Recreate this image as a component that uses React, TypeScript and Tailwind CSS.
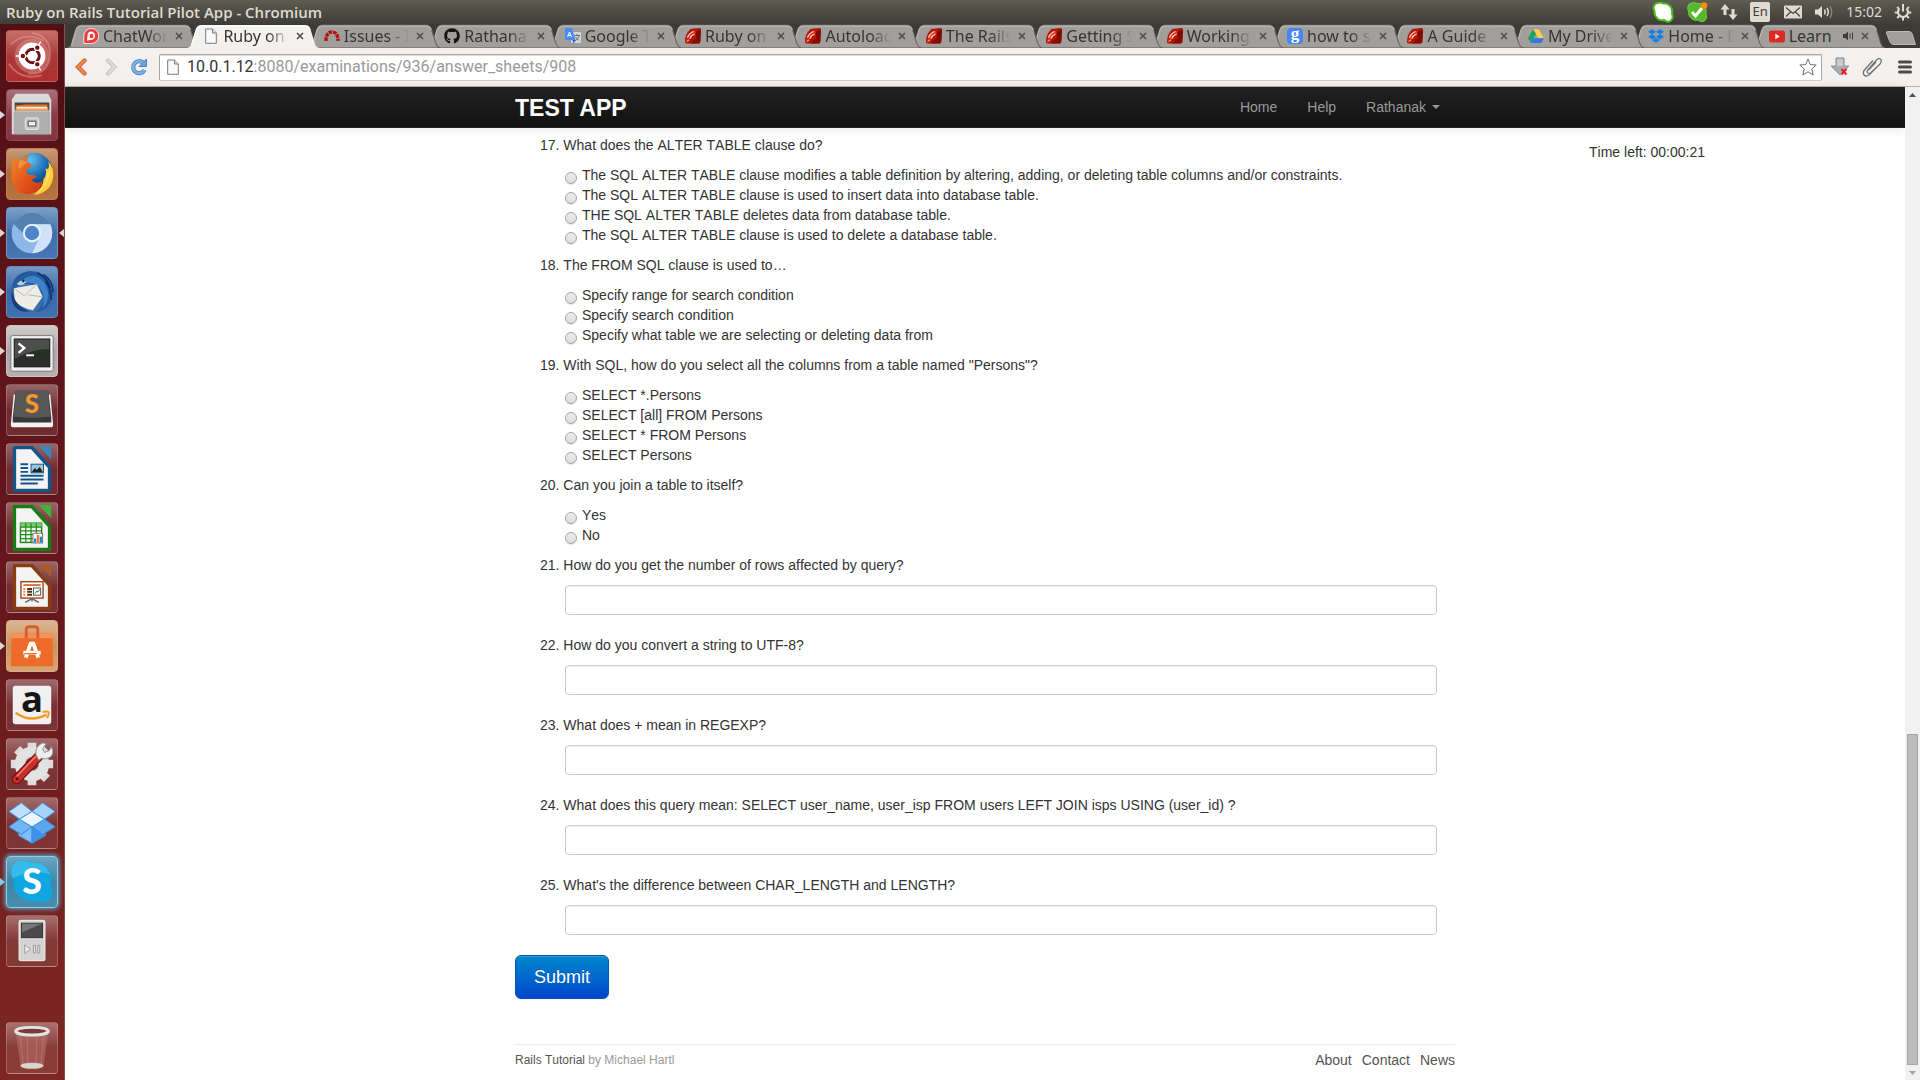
import React, { useState } from "react";
import { FaGithub, FaDropbox } from "react-icons/fa";

/* ---------- tab favicons (16 x 16) ---------- */

const RubyIcon = () => (
  <svg viewBox="0 0 16 16" className="size-4">
    <path d="M5.500 1 L14.500 0 Q16 0 16 1.500 L15.200 14 Q15 15.800 13.500 15.800 L1.500 15.600 Q0 15.500 0 13.500 Q0 6 5.500 1Z" fill="#b01505" />
    <path d="M10.500 4 L16 1.500 L15.200 14.500 L11.500 13Z" fill="#7d0a02" />
    <path d="M5 15.600 L11.500 9 L15 15Z" fill="#8c0d03" />
    <path d="M1.500 10 Q3 5 8 2.500 L11 3.500 L10 6.500 Q6 7.500 5 11.500 L2 12.500Z" fill="#d8301b" />
    <path d="M2.500 9.500 Q4 5.500 8.500 3.500 M5 10.500 Q6 7.500 9.500 6" stroke="#ffd9cc" strokeWidth="1.200" fill="none" />
    <path d="M1.500 13.500 L4 12" stroke="#f7a08f" strokeWidth="1.200" />
  </svg>
);
const ChatIcon = () => (
  <svg viewBox="0 0 16 16" className="size-4">
    <path d="M8.500 .5 A7 7.200 0 1 1 8.500 15.500 H.8 V8 A7.500 7.500 0 0 1 8.500 .5Z" fill="#f03b3b" stroke="#fff" strokeWidth=".8" />
    <path d="M8.500 3.500 A4.300 4.300 0 1 1 7 12 L4 12.800 L4.500 7.500 A4.200 4.200 0 0 1 8.500 3.500Z" fill="#fff" />
    <path d="M8.500 5.500 Q10.500 5.500 10.500 8 L10 10 L7 10.300 Q6.500 6 8.500 5.500Z" fill="#f03b3b" />
  </svg>
);
const PageIcon = () => (
  <svg viewBox="0 0 12 16" className="h-4 w-3">
    <path d="M.7 1 H7.500 L11.300 5 V15.300 H.7Z" fill="#fafafa" stroke="#7b7b7b" />
    <path d="M7.500 1 V5 H11.300" fill="#ddd" stroke="#7b7b7b" />
  </svg>
);
const RedmineIcon = () => (
  <svg viewBox="0 0 16 16" className="size-4">
    <path d="M2 13 Q2 4 8 4 Q14 4 14 13" fill="none" stroke="#b31217" strokeWidth="3.400" strokeDasharray="3.600 .8" />
  </svg>
);
const TranslateIcon = () => (
  <svg viewBox="0 0 16 16" className="size-4">
    <rect x="6" y="4" width="10" height="11" rx="1" fill="#d5d5d5" />
    <path d="M9 7.500 H15 M12 6 V7.500 M14 8 Q13 11 10 13 M10.500 9 L14 12.500" stroke="#5d7380" fill="none" />
    <path d="M0 1 Q0 0 1 0 H7 L10.500 12 H1 Q0 12 0 11Z" fill="#4a8af4" />
    <path d="M7.500 12 H10.500 L8.500 15.500Z" fill="#2a56c6" />
    <path d="M2.500 9 L4.500 4 L6.500 9 M3.200 7.500 H5.800" stroke="#fff" fill="none" />
  </svg>
);
const GoogleIcon = () => (
  <span className="flex size-4 items-center justify-center rounded-sm bg-[#4587f0] pb-1 font-['Liberation_Serif',serif] text-[17px] leading-4 font-bold text-white">g</span>
);
const DriveIcon = () => (
  <svg viewBox="0 0 16 16" className="size-4">
    <path d="M5.300 1.300 L8 6 L2.700 15 L0 10.300Z" fill="#11a861" />
    <path d="M5.300 1.300 H10.700 L16 10.300 H10.600Z" fill="#ffcf48" />
    <path d="M5.400 10.300 H16 L13.300 15 H2.700Z" fill="#3777e3" />
  </svg>
);
const YoutubeIcon = () => (
  <svg viewBox="0 0 16 16" className="size-4">
    <rect y="2.500" width="16" height="12" rx="2.500" fill="#dd2a22" />
    <path d="M6.300 5.700 L10.800 8.500 L6.300 11.200Z" fill="#fff" />
  </svg>
);

type Tab = { title: string; icon: React.ReactNode; sound?: boolean };
const tabs: Tab[] = [
  { title: "ChatWor", icon: <ChatIcon /> },
  { title: "Ruby on", icon: <PageIcon /> },
  { title: "Issues - I", icon: <RedmineIcon /> },
  { title: "Rathana", icon: <FaGithub className="size-4 text-[#141414]" /> },
  { title: "Google T", icon: <TranslateIcon /> },
  { title: "Ruby on", icon: <RubyIcon /> },
  { title: "Autoload", icon: <RubyIcon /> },
  { title: "The Rails", icon: <RubyIcon /> },
  { title: "Getting S", icon: <RubyIcon /> },
  { title: "Working", icon: <RubyIcon /> },
  { title: "how to s", icon: <GoogleIcon /> },
  { title: "A Guide I", icon: <RubyIcon /> },
  { title: "My Drive", icon: <DriveIcon /> },
  { title: "Home - D", icon: <FaDropbox className="size-4 text-[#1081e8]" /> },
  { title: "Learn", icon: <YoutubeIcon />, sound: true },
];

function BrowserTab({ tab, active, z }: { tab: Tab; active: boolean; z: number }) {
  return (
    <div className="relative flex h-6 min-w-0 flex-1 items-center pl-4" style={{ zIndex: z }}>
      <svg viewBox="0 0 132 24" preserveAspectRatio="none" className="absolute top-0 left-0 h-6 w-[calc(100%+12px)]">
        <path
          d="M0 24 C4 23 4 21 5 18 L9 5 Q10.500 1 14 1 H118 Q121.500 1 123 5 L127 18 C128 21 128 23 132 24Z"
          fill={active ? "#f2f1f0" : "#a09f9c"}
          stroke={active ? "none" : "#62615c"}
          strokeWidth="1"
        />
        <path d="M4.500 21 L9 6 Q10.500 2 14 2 H118 Q121.500 2 123 6" fill="none" stroke={active ? "#fff" : "#c0bfbc"} />
      </svg>
      <span className="relative flex w-4 shrink-0 justify-center">{tab.icon}</span>
      <button
        className={
          tab.sound
            ? "relative ml-1 w-[48px] text-left text-[16px] leading-6 whitespace-nowrap text-[#37352f]"
            : "relative ml-1 min-w-0 flex-1 overflow-hidden text-left text-[16px] leading-6 whitespace-nowrap text-[#37352f] [mask-image:linear-gradient(to_right,#000_68%,transparent)]"
        }
      >
        {tab.title}
      </button>
      {tab.sound && (
        <svg viewBox="0 0 12 12" className="relative ml-auto size-3 text-[#3c3b37]">
          <path d="M1 4 H3.500 L6 1.500 V10.500 L3.500 8 H1Z" fill="currentColor" />
          <path d="M8 3.500 V8.500 M10.500 2.500 V9.500" stroke="currentColor" />
        </svg>
      )}
      <button aria-label={"Close " + tab.title} className="relative mr-[3px] ml-[6px] shrink-0">
        <svg viewBox="0 0 10 10" className="size-[10px]">
          <path d="M2 2 L8 8 M8 2 L2 8" stroke="#504f4b" strokeWidth="1.600" />
        </svg>
      </button>
    </div>
  );
}

/* ---------- system indicators ---------- */

const skypeBlob = "M6 2 Q3 2 2 5 Q1 8 2.500 10 Q2 15 6 18 Q9 20 12 19 Q15 22 18.500 20 Q22 17 20 13 Q21 7 17 4 Q14 2 11 2.500 Q9 1 6 2Z";

function TitleBar() {
  return (
    <header className="flex h-6 items-center bg-linear-to-b from-[#5f5c50] to-[#3e3d38] pr-2 pl-[6px] font-['Noto_Sans',sans-serif] text-[#dfdbd2]">
      <h1 className="flex-1 font-['Open_Sans',sans-serif] text-[15px] leading-6 font-semibold">Ruby on Rails Tutorial Pilot App - Chromium</h1>
      <div className="flex items-center gap-3">
        <svg viewBox="0 0 22 22" className="size-[22px]">
          <path d={skypeBlob} fill="#fff" stroke="#4cba1c" strokeWidth="2" />
        </svg>
        <svg viewBox="0 0 22 22" className="size-[22px]">
          <path d={skypeBlob} fill="#55b82c" stroke="#6fd23c" />
          <path d="M6 11 L9.500 15 L16 7" stroke="#fff" strokeWidth="3" fill="none" />
          <circle cx="18" cy="4.500" r="3.300" fill="#f98c0e" />
        </svg>
        <svg viewBox="0 0 18 18" className="size-[18px]">
          <path d="M5 1 L9.500 6.500 H6.500 V12 H3.500 V6.500 H.5Z M13 17 L8.500 11.500 H11.500 V6 H14.500 V11.500 H17.500Z" fill="#dfdbd2" />
        </svg>
        <span className="mr-[2px] flex h-5 w-5 items-center justify-center rounded-xs bg-[#dfdbd2] text-[13px] text-[#3e3d38]">En</span>
        <svg viewBox="0 0 18 14" className="h-[14px] w-[18px]">
          <rect width="18" height="13" y=".5" rx="1" fill="#dfdbd2" />
          <path d="M2 2.500 L9 8.500 L16 2.500 M2 11.500 L6.500 7 M16 11.500 L11.500 7" stroke="#4b4942" fill="none" strokeWidth="1.300" />
        </svg>
        <svg viewBox="0 0 20 16" className="h-4 w-5">
          <path d="M1 5.500 H4 L8 2 V14 L4 10.500 H1Z" fill="#dfdbd2" />
          <path d="M10.500 5.500 Q12 8 10.500 10.500 M13 4 Q15.500 8 13 12" stroke="#dfdbd2" strokeWidth="1.500" fill="none" />
          <path d="M16 2 Q19.500 8 16 14" stroke="#8b887f" strokeWidth="1.300" fill="none" />
        </svg>
        <time className="text-[14px] leading-6">15:02</time>
        <svg viewBox="0 0 18 18" className="size-[18px]">
          <path d="M5.500 5.500 A5 5 0 1 0 12.500 5.500" fill="none" stroke="#dfdbd2" strokeWidth="2.200" />
          <path
            d="M9 1 V8.500 M3.500 9.500 H.8 M14.500 9.500 H17.200 M9 14.500 V17.500 M5 13 L3.200 15.200 M13 13 L14.800 15.200 M4.500 5.500 L3.200 3.800 M13.500 5.500 L14.800 3.800"
            stroke="#dfdbd2"
            strokeWidth="2"
          />
        </svg>
      </div>
    </header>
  );
}

/* ---------- launcher ---------- */

const Art = ({ children }: { children: React.ReactNode }) => (
  <svg viewBox="0 0 52 52" className="size-full">
    {children}
  </svg>
);

const UbuntuArt = () => (
  <Art>
    <path d="M26 2 Q48 6 44 30 Q40 46 22 44 M4 14 Q18 0 38 10 M2 34 Q14 52 36 46" stroke="#e9a9a4" strokeOpacity=".45" strokeWidth="2" fill="none" />
    <circle cx="26" cy="26" r="18" fill="#d98d88" fillOpacity=".5" />
    <circle cx="26" cy="26" r="14" fill="#fff" />
    <circle cx="26.500" cy="26" r="7" fill="none" stroke="#6d1216" strokeWidth="3.200" />
    <path d="M26.500 26 L35 41 M26.500 26 L35 11 M26.500 26 H9" stroke="#fff" strokeWidth="1.400" />
    <circle cx="26.500" cy="26" r="5.200" fill="#fff" />
    <g fill="#6d1216" stroke="#fff" strokeWidth="1.200">
      <circle cx="16.500" cy="26" r="2.900" />
      <circle cx="31.500" cy="17.300" r="2.900" />
      <circle cx="31.500" cy="34.700" r="2.900" />
    </g>
  </Art>
);
const FilesArt = () => (
  <Art>
    <path d="M9 4 H43 L46 10 V46 H5 V10Z" fill="#d9d9d9" />
    <rect x="8" y="13" width="36" height="12" fill="#4c4644" />
    <path d="M9 16 L20 15 H42 V21 H9Z" fill="#e8742c" />
    <rect x="10" y="17.500" width="32" height="2" fill="#f7efdf" />
    <rect x="9" y="19.500" width="34" height="2" fill="#f1a45a" />
    <path d="M7 22 H45 V46 H7Z" fill="#aeaeae" />
    <path d="M7 22 H45" stroke="#dcdcdc" />
    <rect x="19" y="29" width="14" height="12" rx="2" fill="#c6c6c6" stroke="#e9e9e9" />
    <rect x="22" y="32.500" width="8" height="5" fill="#eee" stroke="#666" strokeWidth="1.300" />
  </Art>
);
const FirefoxArt = () => (
  <Art>
    <defs>
      <radialGradient id="ffb" cx=".4" cy=".2" r=".8">
        <stop offset="0" stopColor="#66c0ec" />
        <stop offset=".6" stopColor="#1466ae" />
        <stop offset="1" stopColor="#0b2c66" />
      </radialGradient>
      <linearGradient id="ffo" x1="0" y1="0" x2="1" y2="1">
        <stop offset="0" stopColor="#f08a2c" />
        <stop offset=".6" stopColor="#e2501a" />
        <stop offset="1" stopColor="#c93812" />
      </linearGradient>
    </defs>
    <circle cx="28" cy="23" r="19" fill="url(#ffb)" />
    <path d="M43 13 Q49 20 48 29 Q46 45 28 48 Q38 40 38 31 Q42 27 40 20 Q45 23 43 13Z" fill="#ffcf33" />
    <path d="M45 18 Q46 32 36 42 Q30 47 24 47 Q42 42 41 26 Q45 24 45 18Z" fill="#fff0a0" opacity=".6" />
    <path d="M7 9 Q11 12 14 11 Q18 7 23 7 Q20 10 21 14 Q26 15 25 18 Q24 20 20 22 Q20 26 24 27 Q29 26 31 30 Q27 29 26 33 Q31 37 37 33 Q36 42 28 46 Q16 49 9 41 Q3 34 5 24 Q4 16 7 9Z" fill="url(#ffo)" />
    <path d="M14 11 Q10 17 13 21 Q17 16 21 14" fill="#f4a14c" opacity=".7" />
  </Art>
);
const ChromiumArt = () => (
  <Art>
    <circle cx="26" cy="26" r="21" fill="#7fb0e2" />
    <path d="M7 17 A21 21 0 0 1 45 17 H26 Q16 19 17 26Z" fill="#5180ae" />
    <path d="M45 17 A21 21 0 0 1 26 47 L34 30 Q36 20 27 17Z" fill="#cfe2f7" />
    <path d="M7 17 A21 21 0 0 0 26 47 L32 33 Q20 38 16 27Z" fill="#8db9ea" />
    <circle cx="26" cy="26" r="9.500" fill="#eaf3fd" />
    <circle cx="26" cy="26" r="7.500" fill="#4d86c9" />
  </Art>
);
const ThunderbirdArt = () => (
  <Art>
    <path d="M11 9 Q25 0 38 8 Q50 18 47 32 Q43 46 28 47 Q40 41 38 29 Q34 16 14 18 Q6 22 5 27 Q4 15 11 9Z" fill="#245b9d" />
    <path d="M14 18 Q17 9 28 9 Q42 13 43 30 Q42 38 37 43 Q41 28 33 20 Q24 14 14 18Z" fill="#3e83c9" />
    <path d="M38 8 Q48 14 48 26 M40 15 Q46 22 46 34 M32 6 Q43 12 45 22" stroke="#0e2f66" strokeWidth="1.500" fill="none" />
    <path d="M7 22 L31 18 L37 31 L27 45 Q12 42 8 34Z" fill="#eeece6" />
    <path d="M7 22 L18 30 L31 18 M22 29 L37 31" stroke="#b9b5a8" fill="none" />
    <path d="M5 24 Q8 42 24 46 Q14 48 8 41 Q3 34 5 24Z" fill="#173f7d" />
    <path d="M10 18 Q14 12 20 15 Q16 21 10 18Z" fill="#a9d0ee" />
    <circle cx="17" cy="14.500" r="1.300" fill="#112222" />
  </Art>
);
const TerminalArt = () => (
  <Art>
    <rect x="4" y="10" width="44" height="37" rx="2" fill="#f0f0f0" stroke="#777" />
    <rect x="7.500" y="13.500" width="37" height="29" fill="#2b2d2b" stroke="#111" />
    <path d="M8 14 H44 V24 Q26 24 8 34Z" fill="#4b4e4b" />
    <path d="M12 18 L18 23 L12 28" stroke="#fff" strokeWidth="2.400" fill="none" />
    <path d="M20 30.500 H28" stroke="#fff" strokeWidth="2" />
  </Art>
);
const SublimeArt = () => (
  <Art>
    <path d="M7 10 L4 41 Q4 44 7 44 H45 Q48 44 48 41 L45 10Z" fill="#f3f3f3" />
    <path d="M9 6 H43 L46 34 V39 H6 V34Z" fill="#383838" />
    <path d="M9 6 H43 L45 33 Q26 35 7 33Z" fill="#575757" />
    <text x="26" y="29" textAnchor="middle" fontFamily="Lato, sans-serif" fontWeight="900" fontSize="27" fill="#f8982c">S</text>
  </Art>
);
const DocBase = ({ dark, light, children }: { dark: string; light: string; children: React.ReactNode }) => (
  <Art>
    <path d="M8 2 H27 L46 24 V47 Q46 50 43 50 H9 Q6 50 6 47 V4 Q6 2 8 2Z" fill={dark} />
    <path d="M33 2 H44 Q46 2 46 4 V16Z" fill={light} />
    <path d="M9.500 5.500 H25 L42.500 25 V46.500 H9.500Z" fill="#f4f4f4" />
    {children}
  </Art>
);
const WriterArt = () => (
  <DocBase dark="#14558a" light="#3a86b8">
    <path d="M14 21 H22 M14 25 H22 M14 29 H22 M14 33 H38 M14 37 H38 M14 41 H32" stroke="#14558a" strokeWidth="2" />
    <rect x="25" y="21" width="13" height="9" fill="#8fc4e8" stroke="#14558a" />
    <path d="M25.500 29.500 L29 25 L31 27 L34 24 L37.500 29.500Z" fill="#222" />
    <circle cx="35.500" cy="23.500" r="1.200" fill="#f4c430" />
  </DocBase>
);
const CalcArt = () => (
  <DocBase dark="#187d12" light="#45b038">
    <rect x="14" y="21" width="22" height="20" fill="#fff" stroke="#1f8a18" strokeWidth="1.500" />
    <rect x="14" y="21" width="22" height="4" fill="#7ccf70" />
    <path d="M14 25 H36 M14 29 H36 M14 33 H36 M14 37 H36 M19.500 21 V41 M25 21 V41 M30.500 21 V41" stroke="#1f8a18" strokeWidth="1.300" />
    <rect x="27" y="31.500" width="10" height="10" fill="#fff" stroke="#777" />
    <rect x="28" y="37" width="2.500" height="4" fill="#2287c8" />
    <rect x="31" y="33" width="2.500" height="8" fill="#f07b22" />
    <rect x="34" y="35" width="2.500" height="6" fill="#2287c8" />
  </DocBase>
);
const ImpressArt = () => (
  <DocBase dark="#8a3d10" light="#a85a2a">
    <rect x="14.500" y="20.500" width="23" height="17" fill="#fff" stroke="#a34a1c" strokeWidth="1.500" />
    <path d="M17 24 H35" stroke="#d9713c" strokeWidth="2" />
    <path d="M17 28 H19 M17 31 H19 M17 34 H19" stroke="#e08a5a" strokeWidth="2" />
    <path d="M21 28 H26 M21 31 H26 M21 34 H26" stroke="#5a2a10" strokeWidth="2" />
    <rect x="27.500" y="27" width="7.500" height="7.500" fill="#fff" stroke="#555" />
    <path d="M29 33 L31 30 L32 31.500 L34 28.500" stroke="#2a8a22" fill="none" />
    <path d="M26 38 L19 42 M26 38 L33 42 M26 38 V41" stroke="#666" strokeWidth="1.500" />
  </DocBase>
);
const SoftwareArt = () => (
  <Art>
    <path d="M5 13 H47 L48 47 H4Z" fill="#ee6a28" />
    <path d="M5 13 H47 V18 H5Z" fill="#f4915c" />
    <path d="M20 18 V9 Q20 6 23 6 H29 Q32 6 32 9 V18" stroke="#dd5d28" strokeWidth="3" fill="none" />
    <path d="M19.500 38 L24.500 23.500 H27.500 L32.500 38" stroke="#fff" strokeWidth="4" fill="none" />
    <path d="M17 33 H35" stroke="#fff" strokeWidth="4" />
    <path d="M18 34 H31" stroke="#ee6a28" strokeWidth="1.300" />
  </Art>
);
const AmazonArt = () => (
  <Art>
    <rect x="6" y="6" width="40" height="40" rx="3" fill="#f0f0f0" />
    <text x="26" y="33" textAnchor="middle" fontFamily="Open Sans, sans-serif" fontWeight="700" fontSize="38" fill="#161616">a</text>
    <path d="M9 34 Q24 45 41 36" stroke="#f79a1c" strokeWidth="2.600" fill="none" />
    <path d="M37 33.500 Q41 32 43.500 33.500 Q43.500 37 41.500 39.500" stroke="#f79a1c" strokeWidth="2" fill="none" />
  </Art>
);
const SettingsArt = () => (
  <Art>
    <g stroke="#dcdcdc" strokeWidth="9">
      <path d="M26 4 V48 M4 26 H48 M10.500 10.500 L41.500 41.500 M41.500 10.500 L10.500 41.500" />
    </g>
    <circle cx="26" cy="26" r="12.500" fill="none" stroke="#e2e2e2" strokeWidth="11" />
    <circle cx="26" cy="26" r="7" fill="#7a2a2a" stroke="#a9a9a9" />
    <path d="M10 42 L33 18" stroke="#7d0f0f" strokeWidth="10" strokeLinecap="round" />
    <path d="M10 42 L33 18" stroke="#c9302b" strokeWidth="7.500" strokeLinecap="round" />
    <path d="M10 39 L30 18" stroke="#ea8377" strokeWidth="1.500" />
    <path d="M30 16 Q29 8 37 4 L41 5 L37 10 L39 14 L44 12 L46 8 Q50 14 45 19 Q40 22 36 20 L33 22Z" fill="#efefef" stroke="#8c8c8c" />
    <circle cx="10.500" cy="41.500" r="1.500" fill="#5c0c0c" />
  </Art>
);
const DropboxArt = () => (
  <Art>
    <g stroke="#3b8fe0" strokeWidth="1">
      <path d="M15 5 L26 14 L13 22 L2 14Z" fill="#bfe0fb" />
      <path d="M37 5 L26 14 L39 22 L50 14Z" fill="#a4d2f9" />
      <path d="M13 22 L26 30 L15 38 L2 30Z" fill="#6fb6f3" />
      <path d="M39 22 L26 30 L37 38 L50 30Z" fill="#58a8ef" />
      <path d="M26 14 L39 22 L26 30 L13 22Z" fill="#e9f5ff" />
      <path d="M12 36 L15 38 L26 30 V47 L12 39Z" fill="#7fbff6" />
      <path d="M40 36 L37 38 L26 30 V47 L40 39Z" fill="#3e93e6" />
    </g>
  </Art>
);
const SkypeArt = () => (
  <Art>
    <path d="M16 4 Q22 4 25 6 Q40 5 45 18 Q47 24 45 30 Q49 36 46 42 Q41 49 33 46 Q20 48 11 39 Q5 31 7 23 Q2 14 7 8 Q11 4 16 4Z" fill="#0fa6e2" />
    <path d="M16 4 Q22 4 25 6 Q40 5 45 18 Q26 12 6 22 Q2 14 7 8 Q11 4 16 4Z" fill="#35bbec" />
    <text x="26" y="38" textAnchor="middle" fontFamily="Lato, sans-serif" fontWeight="900" fontSize="37" fill="#fff">S</text>
  </Art>
);
const PlayerArt = () => (
  <Art>
    <rect x="12.500" y="4.500" width="27" height="42" rx="1.500" fill="#d6d4d3" stroke="#f4f4f4" />
    <rect x="15" y="7.500" width="22" height="15" fill="#4a4a4a" stroke="#333" />
    <path d="M15.500 8 H36.500 L15.500 17Z" fill="#777" />
    <path d="M18.500 30 L24.500 34.500 L18.500 39Z M27.500 30.500 H29.500 V38.500 H27.500Z M32 30.500 H34 V38.500 H32Z" fill="#eee" stroke="#999" />
  </Art>
);
const TrashArt = () => (
  <Art>
    <path d="M9 9 L14 45 Q26 50 38 45 L43 9Z" fill="#b46c6a" fillOpacity=".6" />
    <path d="M14 14 L17 46 M21 15 L22 47 M31 15 L30 47 M38 14 L35 46" stroke="#e0aaa7" strokeOpacity=".3" />
    <ellipse cx="26" cy="44.500" rx="12" ry="3.200" fill="#d5d5d0" />
    <ellipse cx="26" cy="8.500" rx="17" ry="4" fill="#7b3a3a" stroke="#e4e4df" strokeWidth="3" />
  </Art>
);

type LauncherApp = { name: string; tile: string; art: React.ReactNode; running?: boolean; focused?: boolean; arrow?: string };
const glass = "border-white/20 from-white/35 via-white/10 to-white/10";
const apps: LauncherApp[] = [
  { name: "Dash home", tile: "border-[#c9605c]/60 from-[#c9706c] via-[#a83a3c] to-[#b02f2d]", art: <UbuntuArt /> },
  { name: "Files", tile: "border-[#8f4a55] from-[#a8737b] via-[#8a3a47] to-[#853542]", art: <FilesArt />, running: true },
  { name: "Firefox", tile: "border-[#b8835a] from-[#c89c77] via-[#ad6b38] to-[#b9743f]", art: <FirefoxArt />, running: true },
  { name: "Chromium", tile: "border-[#6f97c6] from-[#7d9fc8] via-[#3f6ea9] to-[#4876b4]", art: <ChromiumArt />, running: true, focused: true },
  { name: "Thunderbird", tile: "border-[#5f8cc2] from-[#7599c5] via-[#3a69a8] to-[#3f70b0]", art: <ThunderbirdArt />, running: true },
  { name: "Terminal", tile: "border-[#c9c4c4] from-[#d3cece] via-[#aba5a5] to-[#b5b0b0]", art: <TerminalArt />, running: true },
  { name: "Sublime Text", tile: glass, art: <SublimeArt /> },
  { name: "LibreOffice Writer", tile: glass, art: <WriterArt /> },
  { name: "LibreOffice Calc", tile: glass, art: <CalcArt /> },
  { name: "LibreOffice Impress", tile: glass, art: <ImpressArt /> },
  { name: "Software Center", tile: "border-[#d9ad84] from-[#dcb795] via-[#cc9159] to-[#d6a578]", art: <SoftwareArt />, running: true },
  { name: "Amazon", tile: glass, art: <AmazonArt /> },
  { name: "System Settings", tile: glass, art: <SettingsArt /> },
  { name: "Dropbox", tile: glass, art: <DropboxArt /> },
  {
    name: "Skype",
    tile: "border-[#8ad0ea] from-[#6aa7c2] via-[#3f86a6] to-[#4a8cab] shadow-[0_0_5px_1px_#58b4dc]",
    art: <SkypeArt />,
    running: true,
    arrow: "text-[#7fcdec]",
  },
  { name: "Media player", tile: glass, art: <PlayerArt /> },
];

function LauncherItem({ app }: { app: LauncherApp }) {
  return (
    <li className="relative">
      {app.running && (
        <svg viewBox="0 0 5 8" className={"absolute top-[22px] -left-[6px] h-2 w-[5px] " + (app.arrow ?? "text-[#dcd5d5]")}>
          <path d="M0 0 L5 4 L0 8Z" fill="currentColor" />
        </svg>
      )}
      <button aria-label={app.name} className={"block size-[52px] rounded-sm border bg-linear-to-b " + app.tile}>
        {app.art}
      </button>
      {app.focused && (
        <svg viewBox="0 0 5 8" className="absolute top-[22px] -right-[6px] h-2 w-[5px] text-[#dcd5d5]">
          <path d="M5 0 L0 4 L5 8Z" fill="currentColor" />
        </svg>
      )}
    </li>
  );
}

function Launcher() {
  return (
    <nav aria-label="Launcher" className="flex w-[65px] shrink-0 flex-col border-r border-[#8f4a4a] bg-linear-to-b from-[#531015] via-[#64161b] to-[#7e2722] px-[6px] py-[6px]">
      <ul className="flex flex-1 flex-col gap-[7px]">
        {apps.map((a) => (
          <LauncherItem key={a.name} app={a} />
        ))}
        <li className="mt-auto">
          <button aria-label="Trash" className="block size-[52px] rounded-sm border border-white/20 bg-linear-to-b from-white/35 via-white/10 to-white/10">
            <TrashArt />
          </button>
        </li>
      </ul>
    </nav>
  );
}

/* ---------- browser chrome ---------- */

function TabStrip() {
  return (
    <div className="isolate flex h-6 bg-[#3c3b37] pl-[2px]">
      {tabs.map((t, i) => (
        <BrowserTab key={i} tab={t} active={i === 1} z={i === 1 ? 30 : 20 - i} />
      ))}
      <button aria-label="New tab" className="mr-[3px] ml-3 pt-1">
        <svg viewBox="0 0 32 16" className="h-4 w-8">
          <path d="M2.500 1.500 H24 Q26 1.500 27 3.500 L30.500 14.500 H9 Q6 14.500 5 12 L1.500 3 Q1 1.500 2.500 1.500Z" fill="#a09f9c" stroke="#b9b8b5" />
        </svg>
      </button>
    </div>
  );
}

function Toolbar() {
  return (
    <div className="flex h-[39px] items-center border-b border-[#b5b3b0] bg-[#f2f1f0] pr-2 pl-[9px]">
      <button aria-label="Back">
        <svg viewBox="0 0 14 18" className="h-[18px] w-[14px]">
          <path d="M10.500 2.500 L4 9 L10.500 15.500" stroke="#c5562a" strokeWidth="4.200" strokeLinecap="round" fill="none" />
          <path d="M10.500 2.500 L4 9 L10.500 15.500" stroke="#f58549" strokeWidth="2.600" strokeLinecap="round" fill="none" />
        </svg>
      </button>
      <button aria-label="Forward" disabled className="ml-4">
        <svg viewBox="0 0 14 18" className="h-[18px] w-[14px]">
          <path d="M4 2.500 L10.500 9 L4 15.500" stroke="#c6c4c2" strokeWidth="4" strokeLinecap="round" fill="none" />
          <path d="M4 2.500 L10.500 9 L4 15.500" stroke="#dddbd9" strokeWidth="2.400" strokeLinecap="round" fill="none" />
        </svg>
      </button>
      <button aria-label="Reload" className="ml-3">
        <svg viewBox="0 0 18 18" className="size-[18px]">
          <path d="M13 4.500 A6 6 0 1 0 14.500 12" stroke="#4a82bd" strokeWidth="4.200" fill="none" />
          <path d="M16.500 1 V8.500 H9Z" fill="#6ba3da" stroke="#4a82bd" />
          <path d="M13 4.500 A6 6 0 1 0 14.500 12" stroke="#7db1e2" strokeWidth="2.600" fill="none" />
        </svg>
      </button>
      <div className="ml-[11px] flex h-[27px] min-w-0 flex-1 items-center rounded-xs border border-[#a9a7a4] border-b-[#cfcdca] bg-white pr-1 pl-[7px] shadow-[inset_0_1px_0_#dedede]">
        <PageIcon />
        <p className="ml-2 flex-1 font-[Roboto,sans-serif] text-[16px] leading-6 text-[#9a9a9a]">
          <span className="text-[#333]">10.0.1.12</span>:8080/examinations/936/answer_sheets/908
        </p>
        <button aria-label="Bookmark this page">
          <svg viewBox="0 0 18 18" className="size-[18px]">
            <path d="M9 1 L11.300 6.600 L17.200 7 L12.700 11 L14.200 17 L9 13.800 L3.800 17 L5.300 11 L.8 7 L6.700 6.600Z" fill="#fff" stroke="#6d6d6d" strokeLinejoin="round" />
          </svg>
        </button>
      </div>
      <button aria-label="Downloads" className="ml-2">
        <svg viewBox="0 0 20 20" className="size-5">
          <path d="M6 1 H14 V9 H19 L10 18 L1 9 H6Z" fill="#a6adb2" stroke="#8b9297" />
          <path d="M7 2 H13 V9 H7Z" fill="#c6cbd0" />
          <path d="M11.500 12 L16.500 17.500 M16.500 12 L11.500 17.500" stroke="#e51c1c" strokeWidth="2" />
        </svg>
      </button>
      <button aria-label="Attach" className="ml-3">
        <svg viewBox="0 0 20 20" className="size-5">
          <path d="M5 14 L14.500 3 Q17 .5 18.800 2.500 Q20 4.500 18 7 L7 18 Q4 20 2 18 Q.5 15.500 2.500 13 L11 3.500 M7 12.500 L14 5 M18 7 L8 16.500 Q5.500 17 5 14" stroke="#717171" strokeWidth="1.300" fill="none" />
        </svg>
      </button>
      <button aria-label="Menu" className="ml-4">
        <svg viewBox="0 0 14 14" className="size-[14px]">
          <path d="M1.500 2 H12.500 M1.500 7 H12.500 M1.500 12 H12.500" stroke="#4c4b49" strokeWidth="3" strokeLinecap="round" />
        </svg>
      </button>
    </div>
  );
}

/* ---------- page ---------- */

type Question = { n: number; text: string; options?: string[] };
const questions: Question[] = [
  {
    n: 17,
    text: "What does the ALTER TABLE clause do?",
    options: [
      "The SQL ALTER TABLE clause modifies a table definition by altering, adding, or deleting table columns and/or constraints.",
      "The SQL ALTER TABLE clause is used to insert data into database table.",
      "THE SQL ALTER TABLE deletes data from database table.",
      "The SQL ALTER TABLE clause is used to delete a database table.",
    ],
  },
  {
    n: 18,
    text: "The FROM SQL clause is used to…",
    options: ["Specify range for search condition", "Specify search condition", "Specify what table we are selecting or deleting data from"],
  },
  {
    n: 19,
    text: 'With SQL, how do you select all the columns from a table named "Persons"?',
    options: ["SELECT *.Persons", "SELECT [all] FROM Persons", "SELECT * FROM Persons", "SELECT Persons"],
  },
  { n: 20, text: "Can you join a table to itself?", options: ["Yes", "No"] },
  { n: 21, text: "How do you get the number of rows affected by query?" },
  { n: 22, text: "How do you convert a string to UTF-8?" },
  { n: 23, text: "What does + mean in REGEXP?" },
  { n: 24, text: "What does this query mean: SELECT user_name, user_isp FROM users LEFT JOIN isps USING (user_id) ?" },
  { n: 25, text: "What's the difference between CHAR_LENGTH and LENGTH?" },
];

function QuestionItem({ q }: { q: Question }) {
  const heading = q.n + ". " + q.text;
  if (q.options) {
    return (
      <li>
        <fieldset className="mb-[10px]">
          <legend className="mb-[10px]">{heading}</legend>
          {q.options.map((o) => (
            <label key={o} className="ml-[25px] flex items-start gap-[5px]">
              <input
                type="radio"
                name={"q" + q.n}
                className="mt-[7px] size-3 shrink-0 appearance-none rounded-full border border-[#a3a3a3] bg-linear-to-b from-[#ededed] to-[#dcdcdc] shadow-[0_1px_1px_#0000001a] checked:border-4 checked:border-[#555]"
              />
              {o}
            </label>
          ))}
        </fieldset>
      </li>
    );
  }
  return (
    <li className="mb-5">
      <label htmlFor={"q" + q.n} className="mb-[10px] block">
        {heading}
      </label>
      <div className="mr-[18px] ml-[25px]">
        <input
          id={"q" + q.n}
          type="text"
          className="block h-[30px] w-full rounded-sm border border-[#ccc] bg-white px-[6px] text-[#555] shadow-[inset_0_1px_1px_#00000013]"
        />
      </div>
    </li>
  );
}

function ExamPage() {
  const [secondsLeft] = useState(21);
  return (
    <div className="flex min-w-0 flex-1 flex-col bg-white font-['Liberation_Sans',Arial,sans-serif] text-[14px] leading-5 text-[#333] [font-kerning:none]">
      <div className="border-b border-[#252525] bg-linear-to-b from-[#222] to-[#111] shadow-[0_1px_10px_#0000001a]">
        <div className="mx-auto flex h-10 w-full max-w-[940px] items-center">
          <a href="#" className="flex-1 pt-px text-[23px] leading-10 font-bold text-white [font-kerning:normal]">
            TEST APP
          </a>
          <nav className="flex text-[#999]">
            <a href="#" className="px-[15px]">Home</a>
            <a href="#" className="px-[15px]">Help</a>
            <button className="flex items-center gap-[6px] px-[15px]">
              Rathanak
              <svg viewBox="0 0 8 4" className="h-1 w-2">
                <path d="M0 0 H8 L4 4Z" fill="currentColor" />
              </svg>
            </button>
          </nav>
        </div>
      </div>
      <div className="grid flex-1 grid-cols-[1fr_minmax(0,940px)_1fr]">
        <main className="col-start-2 flex flex-col pt-[7px]">
          <form onSubmit={(e) => e.preventDefault()}>
            <ol className="ml-[25px]">
              {questions.map((q) => (
                <QuestionItem key={q.n} q={q} />
              ))}
            </ol>
            <button
              type="submit"
              className="block h-11 rounded-md border border-[#0055b3] bg-linear-to-b from-[#0088cc] to-[#0044cc] px-[18px] text-[18px] text-white shadow-[inset_0_1px_0_#ffffff33,0_1px_2px_#0000000d] [text-shadow:0_-1px_0_#00000040]"
            >
              Submit
            </button>
          </form>
          <footer className="mt-[45px] flex justify-between border-t border-[#eaeaea] pt-[5px] text-[#999]">
            <small className="text-[12px] leading-5">
              <a href="#" className="text-[#555]">Rails Tutorial</a> by Michael Hartl
            </small>
            <nav className="flex gap-[10px] text-[#555]">
              <a href="#">About</a>
              <a href="#">Contact</a>
              <a href="#">News</a>
            </nav>
          </footer>
        </main>
        <aside className="pt-[14px] pr-[200px] text-right whitespace-nowrap">Time left: 00:00:{secondsLeft}</aside>
      </div>
    </div>
  );
}

function Scrollbar() {
  return (
    <div className="flex w-[15px] shrink-0 flex-col items-center bg-[#f1f1f1]">
      <svg viewBox="0 0 15 15" className="size-[15px] text-[#505050]">
        <path d="M4 10 L7.500 6 L11 10Z" fill="currentColor" />
      </svg>
      <div className="grow-[633]" />
      <div className="w-[11px] grow-[330] border border-[#a6a6a6] bg-[#bcbcbc]" />
      <svg viewBox="0 0 15 15" className="size-[15px] text-[#a3a3a3]">
        <path d="M4 6 L7.500 10 L11 6Z" fill="currentColor" />
      </svg>
    </div>
  );
}

export default function App() {
  return (
    <div className="flex min-h-screen flex-col bg-white">
      <TitleBar />
      <div className="flex flex-1">
        <Launcher />
        <div className="flex min-w-0 flex-1 flex-col">
          <div className="font-['Noto_Sans',sans-serif]">
            <TabStrip />
            <Toolbar />
          </div>
          <div className="flex flex-1">
            <ExamPage />
            <Scrollbar />
          </div>
        </div>
      </div>
    </div>
  );
}
